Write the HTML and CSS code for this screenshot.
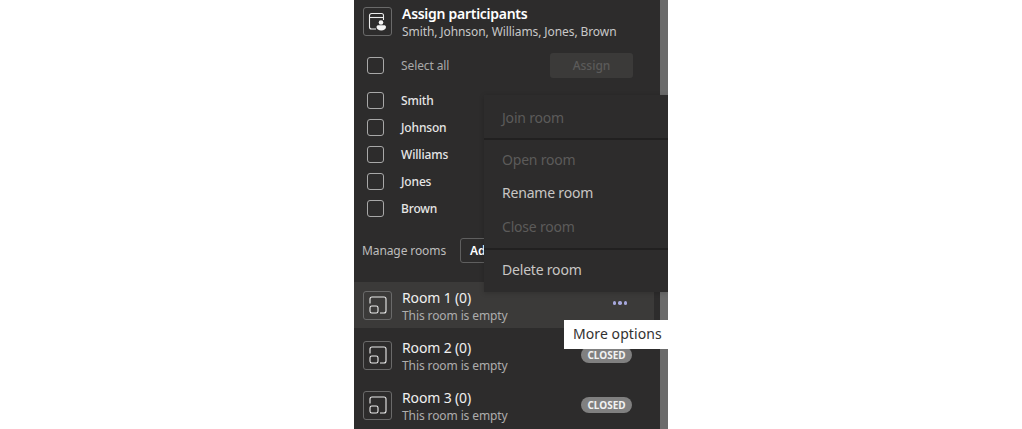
FILE: index.html
```html
<!DOCTYPE html>
<html lang="en">
<head>
  <meta charset="UTF-8" />
  <meta name="viewport" content="width=device-width, initial-scale=1.0" />
  <title>Breakout rooms</title>
  <link rel="stylesheet" href="styles.css">
</head>
<body>
  <div class="panel">
    <div class="assign-head">
      <div class="icon-box">
        <svg width="20" height="20" viewBox="0 0 20 20" fill="none" stroke="#ececec" stroke-width="1.1">
          <path d="M8 17H3.500a2 2 0 0 1-2-2V3.500a2 2 0 0 1 2-2h10a2 2 0 0 1 2 2V8"/>
          <path d="M1.500 5.500h14"/>
          <circle cx="13" cy="10.500" r="2.300" fill="#f5f5f5" stroke="none"/>
          <path d="M8.500 15c0-1.300 1-1.800 2-1.800h5.500c1 0 2 .5 2 1.800 0 2-2.200 3.500-4.750 3.500S8.500 17 8.500 15z" fill="#f5f5f5" stroke="none"/>
        </svg>
      </div>
      <div class="head-text">
        <div class="head-title">Assign participants</div>
        <div class="head-sub">Smith, Johnson, Williams, Jones, Brown</div>
      </div>
    </div>

    <div class="select-row">
      <span class="check"></span>
      <span class="select-label">Select all</span>
      <button class="assign-btn">Assign</button>
    </div>

    <div class="people">
      <div class="person"><span class="check"></span><span>Smith</span></div>
      <div class="person"><span class="check"></span><span>Johnson</span></div>
      <div class="person"><span class="check"></span><span>Williams</span></div>
      <div class="person"><span class="check"></span><span>Jones</span></div>
      <div class="person"><span class="check"></span><span>Brown</span></div>
    </div>

    <div class="manage-row">
      <span class="manage-label">Manage rooms</span>
      <button class="add-btn">Add room</button>
    </div>

    <div class="room room-hover">
      <div class="icon-box">
        <svg width="20" height="20" viewBox="0 0 20 20" fill="none" stroke="#ececec" stroke-width="1.1">
          <path d="M2 8.500V4a2 2 0 0 1 2-2h12a2 2 0 0 1 2 2v12a2 2 0 0 1-2 2h-4"/>
          <rect x="2" y="11" width="8" height="7" rx="1.800"/>
        </svg>
      </div>
      <div class="room-text">
        <div class="room-name">Room 1 (0)</div>
        <div class="room-sub">This room is empty</div>
      </div>
      <span class="dots"><i></i><i></i><i></i></span>
    </div>
    <div class="room">
      <div class="icon-box">
        <svg width="20" height="20" viewBox="0 0 20 20" fill="none" stroke="#ececec" stroke-width="1.1">
          <path d="M2 8.500V4a2 2 0 0 1 2-2h12a2 2 0 0 1 2 2v12a2 2 0 0 1-2 2h-4"/>
          <rect x="2" y="11" width="8" height="7" rx="1.800"/>
        </svg>
      </div>
      <div class="room-text">
        <div class="room-name">Room 2 (0)</div>
        <div class="room-sub">This room is empty</div>
      </div>
      <span class="closed">CLOSED</span>
    </div>
    <div class="room">
      <div class="icon-box">
        <svg width="20" height="20" viewBox="0 0 20 20" fill="none" stroke="#ececec" stroke-width="1.1">
          <path d="M2 8.500V4a2 2 0 0 1 2-2h12a2 2 0 0 1 2 2v12a2 2 0 0 1-2 2h-4"/>
          <rect x="2" y="11" width="8" height="7" rx="1.800"/>
        </svg>
      </div>
      <div class="room-text">
        <div class="room-name">Room 3 (0)</div>
        <div class="room-sub">This room is empty</div>
      </div>
      <span class="closed">CLOSED</span>
    </div>

    <div class="scroll-thumb scroll-top"></div>
    <div class="scroll-thumb scroll-bottom"></div>

    <div class="menu">
      <div class="menu-item disabled">Join room</div>
      <div class="menu-line first-line"></div>
      <div class="menu-item disabled">Open room</div>
      <div class="menu-item">Rename room</div>
      <div class="menu-item disabled">Close room</div>
      <div class="menu-line second-line"></div>
      <div class="menu-item">Delete room</div>
    </div>

    <div class="tooltip">More options</div>
  </div>
</body>
</html>
```

FILE: styles.css
```css
body {
  margin: 0;
  background: #fff;
  display: flex;
  justify-content: center;
  font-family: 'Noto Sans', 'Open Sans', sans-serif;
  height: 429px;
  overflow: hidden;
}

.panel {
  position: relative;
  width: 314px;
  height: 429px;
  background: #2d2c2c;
  overflow: hidden;
  color: #fff;
}

.assign-head {
  display: flex;
  gap: 10px;
  padding: 7px 9px 0;
  height: 39px;
}

.icon-box {
  width: 27px;
  height: 27px;
  border: 1px solid #6a6a6a;
  border-radius: 3px;
  display: flex;
  align-items: center;
  justify-content: center;
  flex: none;
}

.head-text {
  margin-top: -1px;
}

.head-title {
  font-size: 14px;
  font-weight: 600;
  line-height: 16px;
  letter-spacing: -0.28px;
}

.head-sub {
  font-size: 12px;
  line-height: 16px;
  margin-top: 2px;
  color: #c8c8c8;
  letter-spacing: -0.09px;
}

.select-row {
  display: flex;
  align-items: center;
  height: 32px;
  margin-top: 3px;
  padding-left: 13px;
}

.check {
  width: 15px;
  height: 15px;
  border: 1px solid #a8a8a8;
  border-radius: 3px;
  flex: none;
  margin-right: 17px;
}

.select-label {
  font-size: 12px;
  color: #a8a8a8;
  letter-spacing: -0.1px;
}

.assign-btn {
  margin-left: auto;
  margin-right: 35px;
  width: 83px;
  height: 25px;
  background: #3b3a39;
  border: none;
  border-radius: 3px;
  color: #5c5b5a;
  font: 500 12px 'Noto Sans', sans-serif;
  padding: 0;
}

.people {
  margin-top: 6px;
}

.person {
  display: flex;
  align-items: center;
  height: 27px;
  padding-left: 13px;
  font-size: 12px;
  font-weight: 500;
  letter-spacing: -0.15px;
  color: #e6e6e6;
}

.manage-row {
  display: flex;
  align-items: center;
  gap: 14px;
  height: 28px;
  margin-top: 14px;
  padding-left: 8px;
}

.manage-label {
  font-size: 12px;
  color: #bdbdbd;
  letter-spacing: -0.1px;
}

.add-btn {
  width: 96px;
  height: 25px;
  background: #2d2c2c;
  border: 1px solid #5f5f5f;
  border-radius: 3px;
  color: #fff;
  font: 600 12px 'Noto Sans', sans-serif;
  text-align: left;
  padding: 0 0 0 9px;
}

.room {
  display: flex;
  align-items: center;
  gap: 10px;
  width: 300px;
  height: 50px;
  padding-left: 9px;
  box-sizing: border-box;
}

.room-hover {
  height: 46px;
  margin-top: 18px;
  margin-bottom: 2px;
  background: #3b3a39;
}

.room-text {
  margin-top: 2px;
}

.room-name {
  font-size: 14px;
  line-height: 19px;
  color: #f0f0f0;
  letter-spacing: -0.15px;
}

.room-sub {
  font-size: 12px;
  line-height: 17px;
  color: #adadad;
  letter-spacing: -0.1px;
}

.dots {
  display: flex;
  gap: 2px;
  margin-left: auto;
  margin-right: 27px;
  margin-bottom: 4px;
}

.dots i {
  width: 3.4px;
  height: 3.4px;
  border-radius: 50%;
  background: #a6a7dc;
}

.closed {
  margin-left: auto;
  margin-right: 22px;
  width: 51px;
  height: 16px;
  border-radius: 8px;
  background: #808080;
  color: #f2f2f2;
  font-size: 10px;
  font-weight: 700;
  line-height: 16px;
  text-align: center;
}

.scroll-thumb {
  position: absolute;
  right: 0;
  width: 8px;
  background: #6b6b6b;
}

.scroll-top {
  top: 0;
  height: 95px;
}

.scroll-bottom {
  top: 292px;
  bottom: 0;
}

.menu {
  position: absolute;
  left: 130px;
  top: 95px;
  width: 184px;
  height: 197px;
  background: #2d2c2c;
  box-shadow: 0 1px 5px rgba(0, 0, 0, 0.18);
  padding-top: 6px;
  box-sizing: border-box;
}

.menu-item {
  height: 33.5px;
  line-height: 33.5px;
  padding-left: 18px;
  font-size: 14px;
  color: #c8c6c4;
  letter-spacing: -0.2px;
}

.menu-item.disabled {
  color: #5c5b5a;
}

.menu-line {
  height: 2px;
  background: #212020;
}

.first-line {
  margin: 3px 0;
}

.second-line {
  margin: 5px 0 3px;
}

.tooltip {
  position: absolute;
  left: 210px;
  top: 320px;
  width: 104px;
  height: 29px;
  background: #fff;
  color: #323130;
  font-size: 14px;
  line-height: 28px;
  padding-left: 9px;
  box-sizing: border-box;
  letter-spacing: 0.08px;
  white-space: nowrap;
}
```
